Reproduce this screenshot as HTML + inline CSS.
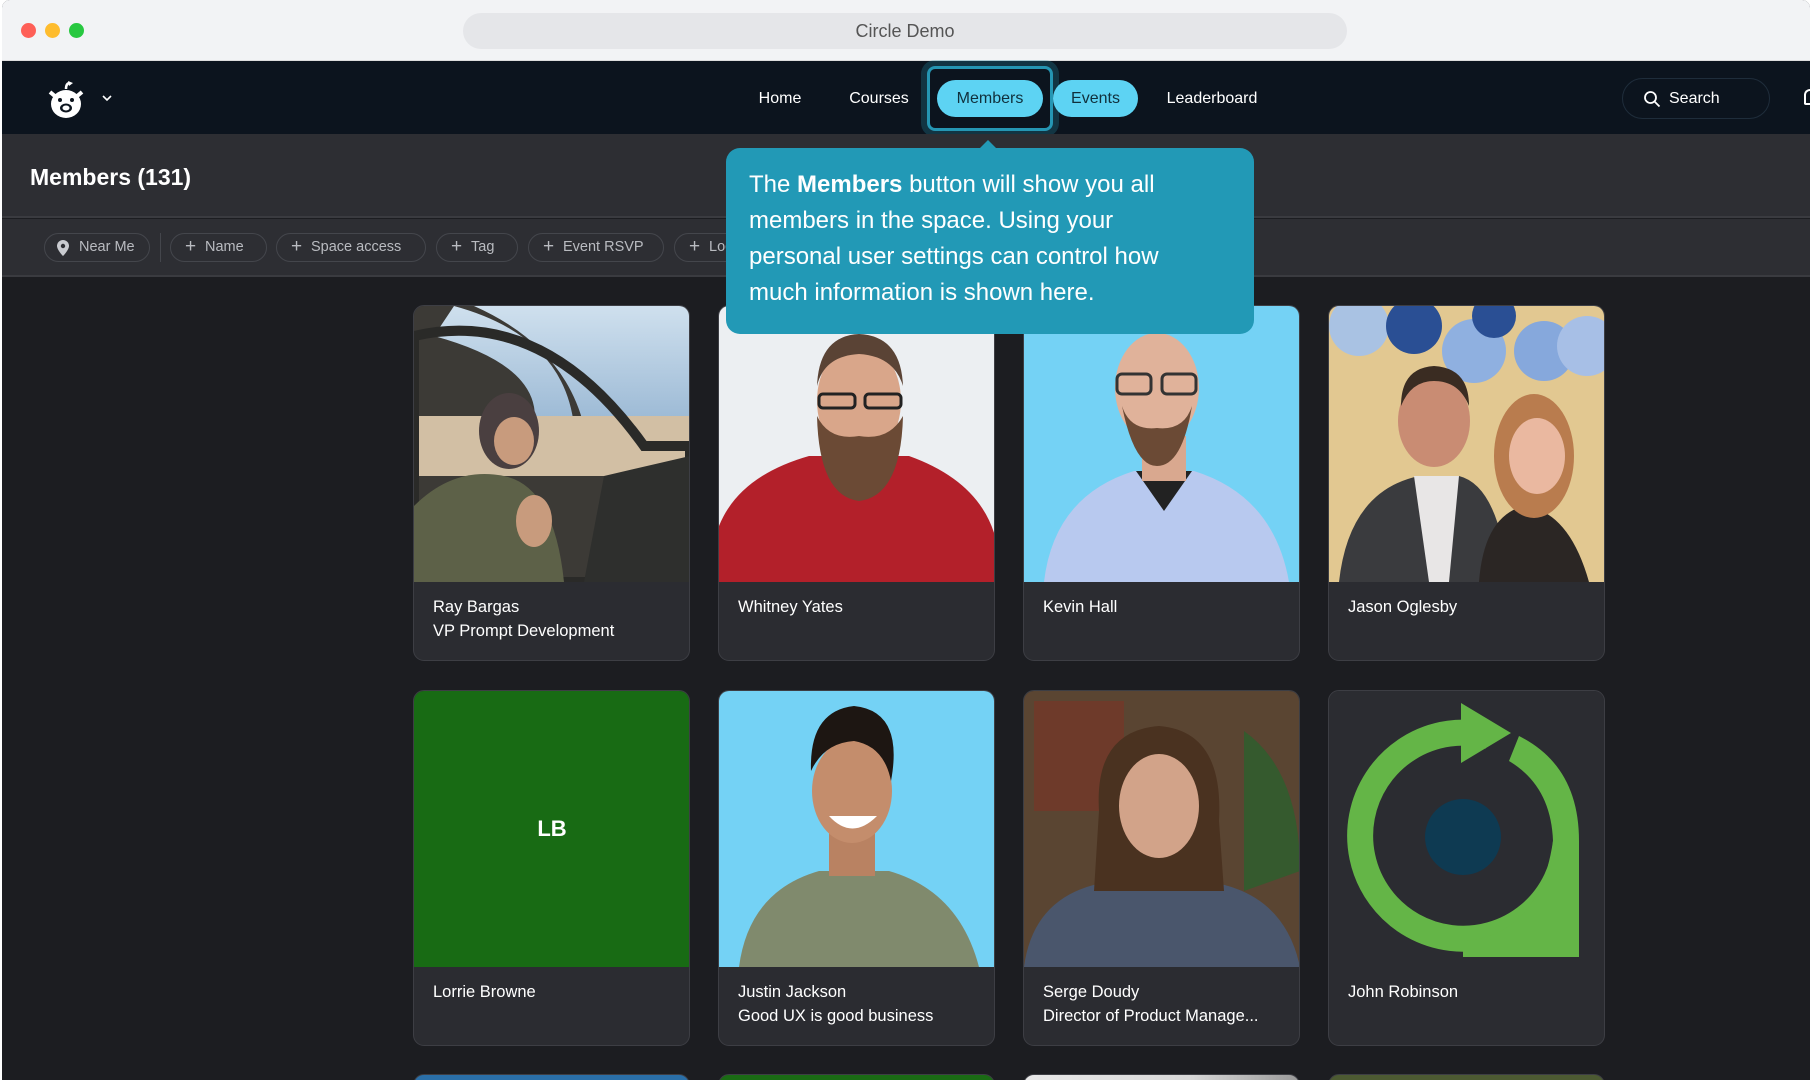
<!DOCTYPE html>
<html><head><meta charset="utf-8">
<style>
*{box-sizing:border-box;margin:0;padding:0}
html,body{width:1812px;height:1080px;overflow:hidden;background:#fff;font-family:"Liberation Sans",Arial,sans-serif}
.win{position:absolute;left:2px;top:0;width:1808px;height:1080px;background:#1c1d21;overflow:hidden;border-radius:8px 8px 0 0}
.title{position:absolute;left:0;top:0;width:100%;height:61px;background:#f2f3f5;border-bottom:1px solid #ddd}
.dot{position:absolute;top:23px;width:15px;height:15px;border-radius:50%}
.addr{position:absolute;left:461px;top:13px;width:884px;height:36px;border-radius:18px;background:#e5e6e9;text-align:center;line-height:36px;font-size:18px;color:#555}
.nav{position:absolute;left:0;top:61px;width:100%;height:73px;background:#0c141e}
.nav .it{position:absolute;top:1px;line-height:73px;color:#fff;font-size:16px;transform:translateX(-50%)}
.pill{position:absolute;top:19px;height:37px;border-radius:19px;background:#5dd3f3;color:#10303c;font-size:16px;line-height:37px;text-align:center}
.hl{position:absolute;left:925px;top:5px;width:126px;height:65px;border:3px solid #2596b3;border-radius:8px;box-shadow:0 0 0 6px rgba(37,150,179,.25)}
.search{position:absolute;left:1620px;top:17px;width:148px;height:41px;border:1px solid #1f2d3b;border-radius:21px;color:#fff;font-size:16px;line-height:39px;padding-left:46px}
.hdr{position:absolute;left:0;top:134px;width:100%;height:84px;background:#2d2e33;border-bottom:2px solid #3a3b40}
.hdr h1{position:absolute;left:28px;top:30px;font-size:23px;font-weight:700;color:#fff}
.flt{position:absolute;left:0;top:219px;width:100%;height:58px;background:#2d2e33;border-bottom:2px solid #3a3b40}
.chip{position:absolute;top:14px;height:29px;border:1px solid #44464c;border-radius:15px;color:#b9bbc0;font-size:14.5px;line-height:27px;padding-left:34px;white-space:nowrap;overflow:hidden}
.chip:before{content:"+";position:absolute;left:14px;top:-1px;font-size:19px;color:#b9bbc0}
.chip.pin:before{content:""}
.tip{position:absolute;left:724px;top:148px;width:528px;height:186px;background:#2299b6;border-radius:14px;color:#fff;font-size:24px;line-height:36px;padding:19px 58px 0 23px}
.arrow{position:absolute;left:977px;top:140px;width:0;height:0;border-left:9px solid transparent;border-right:9px solid transparent;border-bottom:9px solid #2299b6}
.card{position:absolute;width:277px;height:356px;background:#2b2c31;border:1px solid #3d3e44;border-radius:11px;overflow:hidden}
.card svg,.card .img{position:absolute;left:0;top:0;width:276px;height:276px;display:block}
.card .t{position:absolute;left:19px;top:289px;color:#fff;font-size:16.5px;line-height:24px}
.c3{position:absolute;top:1074px;width:277px;height:40px;border-radius:11px 11px 0 0;border:1px solid #3d3e44}
</style></head><body>
<div class="win">
 <div class="title">
  <div class="dot" style="left:19px;background:#fe5f57"></div>
  <div class="dot" style="left:43px;background:#febc2e"></div>
  <div class="dot" style="left:67px;background:#28c840"></div>
  <div class="addr">Circle Demo</div>
 </div>
 <div class="nav">
  <svg style="position:absolute;left:44px;top:19px" width="40" height="40" viewBox="0 0 40 40">
   <path d="M24 3 q-4 0 -4 6" stroke="#fff" stroke-width="2.5" fill="none"/><path d="M22 1 l5 2 -4 3z" fill="#fff"/>
   <path d="M4 12 l6 5 M36 12 l-6 5" stroke="#fff" stroke-width="4"/>
   <ellipse cx="20" cy="24" rx="15" ry="14" fill="#fff"/>
   <circle cx="14" cy="20" r="2" fill="#0c141e"/><circle cx="26" cy="20" r="2" fill="#0c141e"/>
   <ellipse cx="20" cy="28" rx="6" ry="4.5" fill="#0c141e"/><ellipse cx="20" cy="28" rx="3.5" ry="2.5" fill="#fff"/>
  </svg>
  <svg style="position:absolute;left:100px;top:33px" width="10" height="8" viewBox="0 0 10 8"><path d="M1 2 l4 4 4-4" stroke="#fff" stroke-width="1.6" fill="none"/></svg>
  <div class="it" style="left:778px">Home</div>
  <div class="it" style="left:877px">Courses</div>
  <div class="hl"></div>
  <div class="pill" style="left:935px;width:106px">Members</div>
  <div class="pill" style="left:1051px;width:85px">Events</div>
  <div class="it" style="left:1210px">Leaderboard</div>
  <div class="search">Search
   <svg style="position:absolute;left:20px;top:11px" width="18" height="18" viewBox="0 0 18 18"><circle cx="7.5" cy="7.5" r="5.5" stroke="#fff" stroke-width="1.8" fill="none"/><path d="M11.5 11.5 l5 5" stroke="#fff" stroke-width="1.8"/></svg>
  </div>
  <div style="position:absolute;left:1802px;top:28px;width:8px;height:16px;border:2px solid #fff;border-right:none;border-radius:6px 0 0 2px"></div>
 </div>
 <div class="hdr"><h1>Members (131)</h1></div>
 <div class="flt">
  <div class="chip pin" style="left:42px;width:106px">Near Me
   <svg style="position:absolute;left:12px;top:6px" width="12" height="16" viewBox="0 0 12 16"><path d="M6 0 a6 6 0 0 1 6 6 c0 4 -6 10 -6 10 s-6 -6 -6 -10 a6 6 0 0 1 6 -6z" fill="#c9cbd0"/><circle cx="6" cy="6" r="2.2" fill="#2d2e33"/></svg>
  </div>
  <div style="position:absolute;left:158px;top:14px;width:1px;height:29px;background:#44464c"></div>
  <div class="chip" style="left:168px;width:97px">Name</div>
  <div class="chip" style="left:274px;width:150px">Space access</div>
  <div class="chip" style="left:434px;width:82px">Tag</div>
  <div class="chip" style="left:526px;width:136px">Event RSVP</div>
  <div class="chip" style="left:672px;width:80px">Location</div>
 </div>

 <div class="card" style="left:411px;top:305px">
  <svg viewBox="0 0 276 276"><defs><linearGradient id="sk" x1="0" y1="0" x2="0" y2="1"><stop offset="0" stop-color="#cfe0ee"/><stop offset="1" stop-color="#9ab8d4"/></linearGradient></defs>
   <rect width="276" height="276" fill="#3c3a36"/>
   <path d="M60 0 Q150 40 170 120 L276 120 L276 0z" fill="url(#sk)"/>
   <path d="M40 0 Q150 30 160 120 L120 120 Q130 60 20 30z" fill="url(#sk)"/>
   <rect x="0" y="110" width="276" height="60" fill="#d2bfa4"/>
   <path d="M0 30 Q130 0 230 140 L276 140 L276 276 L0 276z" fill="none" stroke="#2a2a28" stroke-width="10"/>
   <path d="M190 170 L276 150 L276 276 L170 276z" fill="#2e2f2d"/>
   <path d="M0 200 Q40 160 90 170 Q140 180 150 276 L0 276z" fill="#5d6148"/>
   <ellipse cx="95" cy="125" rx="30" ry="38" fill="#4a3f40"/>
   <ellipse cx="100" cy="135" rx="20" ry="24" fill="#c89b7d"/>
   <ellipse cx="120" cy="215" rx="18" ry="26" fill="#c89b7d"/>
  </svg>
  <div class="t">Ray Bargas<br>VP Prompt Development</div>
 </div>
 <div class="card" style="left:716px;top:305px">
  <svg viewBox="0 0 276 276">
   <rect width="276" height="276" fill="#eceff2"/>
   <path d="M0 276 L0 220 Q20 170 90 150 L190 150 Q260 175 276 230 L276 276z" fill="#b3202a"/>
   <ellipse cx="140" cy="95" rx="42" ry="58" fill="#d9a68a"/>
   <path d="M98 80 Q100 30 140 28 Q182 30 184 80 Q175 50 140 48 Q105 50 98 80z" fill="#5a4335"/>
   <path d="M98 110 Q100 190 140 195 Q182 190 184 110 Q170 135 140 130 Q110 135 98 110z" fill="#6b4a35"/>
   <rect x="100" y="88" width="36" height="14" rx="4" fill="none" stroke="#222" stroke-width="3"/>
   <rect x="146" y="88" width="36" height="14" rx="4" fill="none" stroke="#222" stroke-width="3"/>
  </svg>
  <div class="t">Whitney Yates</div>
 </div>
 <div class="card" style="left:1021px;top:305px">
  <svg viewBox="0 0 276 276">
   <rect width="276" height="276" fill="#74d2f5"/>
   <path d="M20 276 Q30 190 110 165 L170 165 Q250 190 265 276z" fill="#b8c9ef"/>
   <path d="M112 165 L140 205 L168 165z" fill="#222"/>
   <rect x="118" y="130" width="44" height="45" fill="#d9a88f"/>
   <ellipse cx="133" cy="82" rx="42" ry="55" fill="#e0b29a"/>
   <path d="M98 100 Q110 160 133 160 Q158 160 168 100 Q160 125 133 122 Q106 125 98 100z" fill="#6b4a35"/>
   <rect x="93" y="68" width="34" height="20" rx="5" fill="none" stroke="#333" stroke-width="3"/>
   <rect x="138" y="68" width="34" height="20" rx="5" fill="none" stroke="#333" stroke-width="3"/>
  </svg>
  <div class="t">Kevin Hall</div>
 </div>
 <div class="card" style="left:1326px;top:305px">
  <svg viewBox="0 0 276 276">
   <rect width="276" height="276" fill="#e2c891"/>
   <circle cx="30" cy="20" r="30" fill="#a9c2e3"/><circle cx="85" cy="20" r="28" fill="#2a4f94"/>
   <circle cx="145" cy="45" r="32" fill="#8fb0e0"/><circle cx="165" cy="10" r="22" fill="#2a4f94"/>
   <circle cx="215" cy="45" r="30" fill="#86a8dc"/><circle cx="258" cy="40" r="30" fill="#a7bfe6"/>
   <path d="M10 276 Q20 185 90 170 L130 170 Q170 180 180 276z" fill="#3a3b3e"/>
   <path d="M85 170 L100 276 L120 276 L130 170z" fill="#e8e6e6"/>
   <ellipse cx="105" cy="115" rx="36" ry="46" fill="#c98c73"/>
   <path d="M72 100 Q72 62 105 60 Q140 62 140 100 Q130 75 105 75 Q82 75 72 100z" fill="#3a2c22"/>
   <path d="M150 276 Q155 210 195 200 Q240 205 260 276z" fill="#2b2624"/>
   <ellipse cx="205" cy="150" rx="40" ry="62" fill="#b97c4e"/>
   <ellipse cx="208" cy="150" rx="28" ry="38" fill="#eab8a0"/>
  </svg>
  <div class="t">Jason Oglesby</div>
 </div>

 <div class="card" style="left:411px;top:690px">
  <div class="img" style="background:#186b14;color:#fff;font-size:22px;font-weight:700;text-align:center;line-height:276px">LB</div>
  <div class="t">Lorrie Browne</div>
 </div>
 <div class="card" style="left:716px;top:690px">
  <svg viewBox="0 0 276 276">
   <rect width="276" height="276" fill="#74d2f5"/>
   <path d="M20 276 Q30 200 100 180 L170 180 Q240 200 260 276z" fill="#808a6d"/>
   <rect x="110" y="140" width="46" height="45" fill="#b98262"/>
   <ellipse cx="133" cy="100" rx="40" ry="52" fill="#c48d6c"/>
   <path d="M92 80 Q90 20 135 15 Q185 20 172 90 Q165 55 135 50 Q105 52 92 80z" fill="#1d1612"/>
   <path d="M110 125 Q133 150 158 125z" fill="#fff"/>
  </svg>
  <div class="t">Justin Jackson<br>Good UX is good business</div>
 </div>
 <div class="card" style="left:1021px;top:690px">
  <svg viewBox="0 0 276 276">
   <rect width="276" height="276" fill="#5a4532"/>
   <rect x="10" y="10" width="90" height="110" fill="#6e3a2a"/>
   <path d="M220 40 Q276 80 276 180 L220 200z" fill="#355a2e"/>
   <path d="M0 276 Q10 200 90 190 L180 190 Q260 200 276 276z" fill="#4a566c"/>
   <path d="M75 120 Q70 40 135 35 Q200 40 195 130 L200 200 L70 200z" fill="#4a3220"/>
   <ellipse cx="135" cy="115" rx="40" ry="52" fill="#d2a389"/>
  </svg>
  <div class="t">Serge Doudy<br>Director of Product Manage...</div>
 </div>
 <div class="card" style="left:1326px;top:690px">
  <svg viewBox="0 0 276 276">
   <rect width="276" height="276" fill="#2b2c31"/>
   <circle cx="134" cy="146" r="38" fill="#0e3a52"/>
   <path d="M160 45 A103 103 0 1 0 237 150" fill="none" stroke="#64b547" stroke-width="26"/>
   <path d="M190 45 Q250 75 250 150 L250 266 L134 266 L134 250 Q210 245 224 150 Q222 95 180 70z" fill="#64b547"/>
   <path d="M132 12 L182 42 L132 72z" fill="#64b547"/>
  </svg>
  <div class="t">John Robinson</div>
 </div>

 <div class="c3" style="left:411px;background:#2a6fa8"></div>
 <div class="c3" style="left:716px;background:#1a6b14"></div>
 <div class="c3" style="left:1021px;background:linear-gradient(90deg,#e8e8e8,#d8d8d8 60%,#9a9a9a)"></div>
 <div class="c3" style="left:1326px;background:#4c5a32"></div>

 <div class="arrow"></div>
 <div class="tip">The <b>Members</b> button will show you all members in the space. Using your personal user settings can control how much information is shown here.</div>
</div>
</body></html>
